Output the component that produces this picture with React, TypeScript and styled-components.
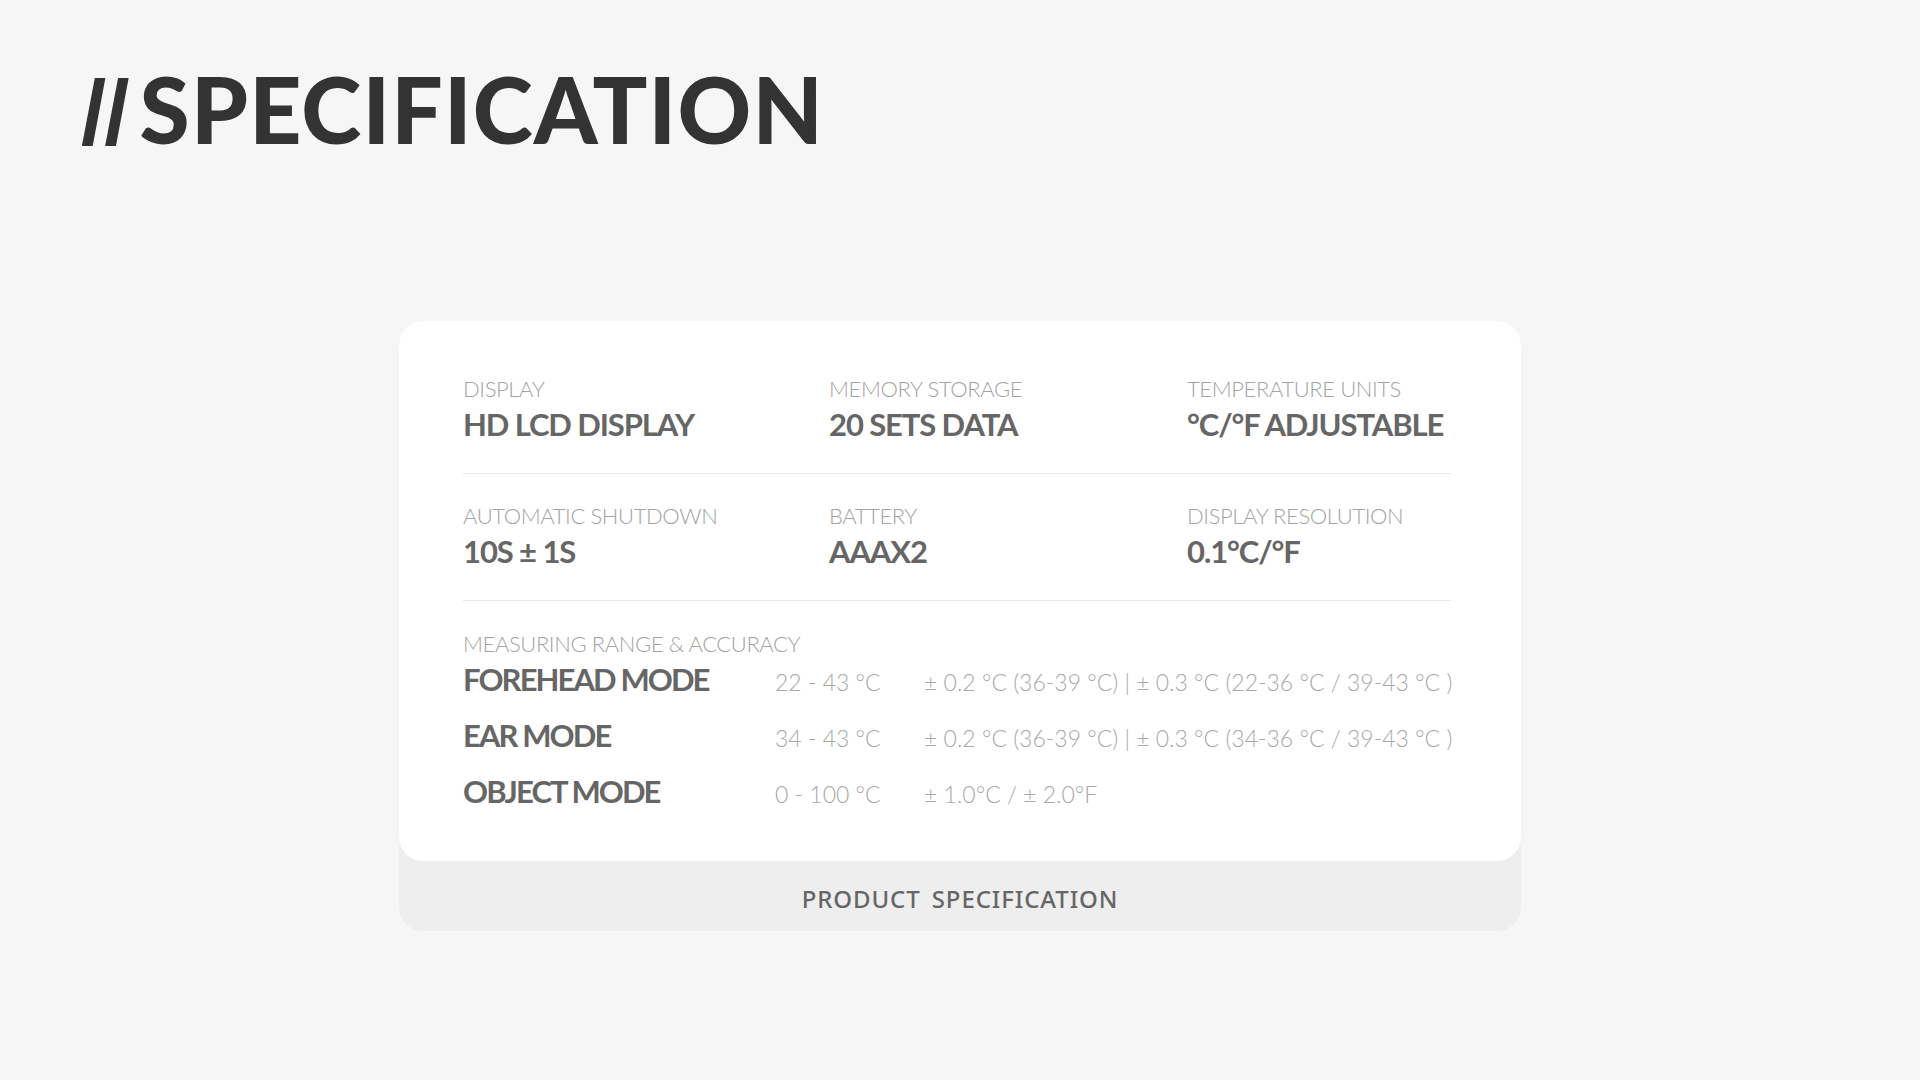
import React from "react";
import styled, { createGlobalStyle } from "styled-components";

const GlobalStyle = createGlobalStyle`
  html, body { margin: 0; padding: 0; background: #f6f6f6; }
  body { font-family: Lato, "Liberation Sans", sans-serif; }
  #root { width: 1920px; height: 1080px; }
`;

const Page = styled.div`
  width: 1920px;
  height: 1080px;
  box-sizing: border-box;
  padding-top: 63px;
  background: #f6f6f6;
  overflow: hidden;
`;

const Title = styled.h1`
  margin: 0 0 0 81px;
  height: 91px;
  font-family: Lato, "Liberation Sans", sans-serif;
  font-weight: 900;
  font-size: 91px;
  line-height: 91px;
  color: #333333;
  letter-spacing: 1.2px;
  white-space: nowrap;
`;

const Slashes = styled.span`
  font-family: "Liberation Sans", Arial, sans-serif;
  font-weight: 700;
  letter-spacing: -2px;
  margin-right: 12px;
`;

const Panel = styled.section`
  width: 1122px;
  margin: 167px auto 0;
  background: #eeeeee;
  border-radius: 24px;
`;

const Card = styled.div`
  background: #ffffff;
  border-radius: 24px;
  padding: 53px 70px 50px 64px;
`;

const SpecRow = styled.div`
  display: grid;
  grid-template-columns: 366px 358px 1fr;
  padding: 27px 0 29px;
  border-bottom: 1px solid #e8e8e8;
  &:first-child {
    padding-top: 0;
  }
`;

const Spec = styled.div`
  display: flex;
  flex-direction: column;
`;

const Label = styled.div`
  font-family: Lato, "Liberation Sans", sans-serif;
  font-weight: 300;
  font-size: 22px;
  line-height: 30px;
  letter-spacing: -0.4px;
  color: #a3a3a3;
  white-space: nowrap;
`;

const Value = styled.div`
  font-family: Lato, "Liberation Sans", sans-serif;
  font-weight: 700;
  font-size: 31px;
  line-height: 40px;
  letter-spacing: -1.1px;
  color: #666666;
  white-space: nowrap;
`;

const RangeSection = styled.div`
  padding-top: 28px;
  display: flex;
  flex-direction: column;
`;

const ModeList = styled.div`
  display: flex;
  flex-direction: column;
  gap: 16px;
`;

const ModeRow = styled.div`
  display: grid;
  grid-template-columns: 312px 149px 1fr;
  align-items: baseline;
  height: 40px;
`;

const ModeName = styled(Value)`
  letter-spacing: -1.9px;
`;

const ModeText = styled.div`
  font-family: Lato, "Liberation Sans", sans-serif;
  font-weight: 300;
  font-size: 23px;
  line-height: 28px;
  color: #a8a8a8;
  white-space: nowrap;
`;

const Footer = styled.div`
  height: 70px;
  box-sizing: border-box;
  padding-top: 5px;
  display: flex;
  align-items: center;
  justify-content: center;
  font-family: "Noto Sans", "Open Sans", sans-serif;
  font-weight: 500;
  font-size: 24px;
  letter-spacing: 0.9px;
  word-spacing: 4px;
  color: #666666;
`;

const specRows = [
  [
    { label: "DISPLAY", value: "HD LCD DISPLAY" },
    { label: "MEMORY STORAGE", value: "20 SETS DATA" },
    { label: "TEMPERATURE UNITS", value: "°C/°F ADJUSTABLE" },
  ],
  [
    { label: "AUTOMATIC SHUTDOWN", value: "10S ± 1S" },
    { label: "BATTERY", value: "AAAX2" },
    { label: "DISPLAY RESOLUTION", value: "0.1°C/°F" },
  ],
];

const modes = [
  {
    name: "FOREHEAD MODE",
    range: "22 - 43 °C",
    accuracy: "± 0.2 °C (36-39 °C) | ± 0.3 °C (22-36 °C / 39-43 °C )",
  },
  {
    name: "EAR MODE",
    range: "34 - 43 °C",
    accuracy: "± 0.2 °C (36-39 °C) | ± 0.3 °C (34-36 °C / 39-43 °C )",
  },
  {
    name: "OBJECT MODE",
    range: "0 - 100 °C",
    accuracy: "± 1.0°C / ± 2.0°F",
  },
];

export default function App() {
  return (
    <>
      <GlobalStyle />
      <Page>
        <Title>
          <Slashes>//</Slashes>SPECIFICATION
        </Title>
        <Panel>
          <Card>
            {specRows.map((row, i) => (
              <SpecRow key={i}>
                {row.map((s) => (
                  <Spec key={s.label}>
                    <Label>{s.label}</Label>
                    <Value>{s.value}</Value>
                  </Spec>
                ))}
              </SpecRow>
            ))}
            <RangeSection>
              <Label>MEASURING RANGE &amp; ACCURACY</Label>
              <ModeList>
                {modes.map((m) => (
                  <ModeRow key={m.name}>
                    <ModeName>{m.name}</ModeName>
                    <ModeText>{m.range}</ModeText>
                    <ModeText>{m.accuracy}</ModeText>
                  </ModeRow>
                ))}
              </ModeList>
            </RangeSection>
          </Card>
          <Footer>PRODUCT SPECIFICATION</Footer>
        </Panel>
      </Page>
    </>
  );
}
